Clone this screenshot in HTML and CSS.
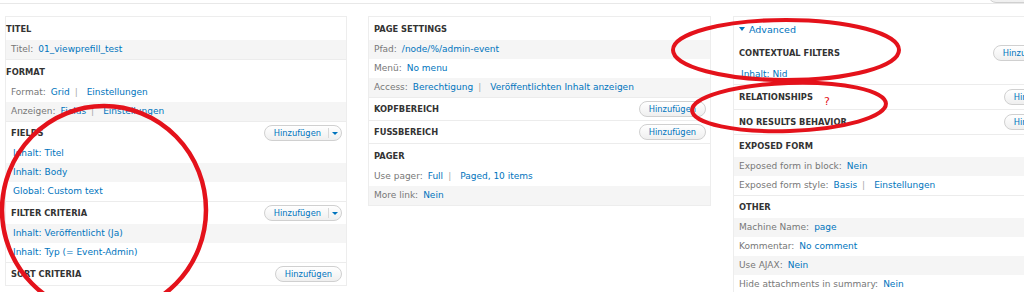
FILE: index.html
```html
<!DOCTYPE html>
<html lang="de">
<head>
    <meta charset="UTF-8">
    <title>Views UI - Display</title>
    <link rel="stylesheet" href="styles.css">
</head>
<body>
    <div class="topbar">
        <span class="btn top-btn">Hinzufügen</span>
    </div>

    <div class="columns">
        <!-- first column -->
        <div class="col col-first">
            <div class="group">
                <div class="group-title flush">TITEL</div>
                <div class="row alt"><span class="label">Titel:</span><a href="#">01_viewprefill_test</a></div>
            </div>
            <div class="group">
                <div class="group-title flush">FORMAT</div>
                <div class="row"><span class="label">Format:</span><a href="#">Grid</a><span class="sep">|</span><a href="#">Einstellungen</a></div>
                <div class="row alt"><span class="label">Anzeigen:</span><a href="#">Fields</a><span class="sep">|</span><a href="#">Einstellungen</a></div>
            </div>
            <div class="group bucket">
                <div class="group-title">FIELDS
                    <span class="btn btn-drop"><span class="btn-text">Hinzufügen</span><span class="btn-arrow"></span></span>
                </div>
                <div class="row"><a href="#">Inhalt: Titel</a></div>
                <div class="row alt"><a href="#">Inhalt: Body</a></div>
                <div class="row"><a href="#">Global: Custom text</a></div>
            </div>
            <div class="group bucket">
                <div class="group-title">FILTER CRITERIA
                    <span class="btn btn-drop"><span class="btn-text">Hinzufügen</span><span class="btn-arrow"></span></span>
                </div>
                <div class="row alt"><a href="#">Inhalt: Veröffentlicht (Ja)</a></div>
                <div class="row"><a href="#">Inhalt: Typ (= Event-Admin)</a></div>
            </div>
            <div class="group bucket">
                <div class="group-title">SORT CRITERIA
                    <span class="btn">Hinzufügen</span>
                </div>
            </div>
        </div>

        <!-- second column -->
        <div class="col col-mid">
            <div class="group">
                <div class="group-title">PAGE SETTINGS</div>
                <div class="row alt"><span class="label">Pfad:</span><a href="#">/node/%/admin-event</a></div>
                <div class="row"><span class="label">Menü:</span><a href="#">No menu</a></div>
                <div class="row alt"><span class="label">Access:</span><a href="#">Berechtigung</a><span class="sep">|</span><a href="#">Veröffentlichten Inhalt anzeigen</a></div>
            </div>
            <div class="group bucket">
                <div class="group-title">KOPFBEREICH
                    <span class="btn">Hinzufügen</span>
                </div>
            </div>
            <div class="group bucket">
                <div class="group-title">FUSSBEREICH
                    <span class="btn">Hinzufügen</span>
                </div>
            </div>
            <div class="group">
                <div class="group-title">PAGER</div>
                <div class="row"><span class="label">Use pager:</span><a href="#">Full</a><span class="sep">|</span><a href="#">Paged, 10 items</a></div>
                <div class="row alt"><span class="label">More link:</span><a href="#">Nein</a></div>
            </div>
        </div>

        <!-- third column -->
        <div class="col col-side">
            <div class="advanced">
                <span class="caret"></span><a href="#">Advanced</a>
            </div>
            <div class="group bucket">
                <div class="group-title">CONTEXTUAL FILTERS
                    <span class="btn btn-drop"><span class="btn-text">Hinzufügen</span><span class="btn-arrow"></span></span>
                </div>
                <div class="row"><a href="#">Inhalt: Nid</a></div>
            </div>
            <div class="group bucket">
                <div class="group-title">RELATIONSHIPS
                    <span class="btn">Hinzufügen</span>
                </div>
            </div>
            <div class="group bucket">
                <div class="group-title">NO RESULTS BEHAVIOR
                    <span class="btn">Hinzufügen</span>
                </div>
            </div>
            <div class="group">
                <div class="group-title">EXPOSED FORM</div>
                <div class="row alt"><span class="label">Exposed form in block:</span><a href="#">Nein</a></div>
                <div class="row"><span class="label">Exposed form style:</span><a href="#">Basis</a><span class="sep">|</span><a href="#">Einstellungen</a></div>
            </div>
            <div class="group">
                <div class="group-title">OTHER</div>
                <div class="row alt"><span class="label">Machine Name:</span><a href="#">page</a></div>
                <div class="row"><span class="label">Kommentar:</span><a href="#">No comment</a></div>
                <div class="row alt"><span class="label">Use AJAX:</span><a href="#">Nein</a></div>
                <div class="row"><span class="label">Hide attachments in summary:</span><a href="#">Nein</a></div>
            </div>
        </div>
    </div>

    <!-- hand drawn marks on top of the screenshot -->
    <svg class="marks" width="1024" height="292" viewBox="0 0 1024 292">
        <ellipse cx="786" cy="50" rx="113" ry="30"/>
        <ellipse cx="789" cy="107" rx="97" ry="24" transform="rotate(-2 789 107)"/>
        <ellipse cx="104" cy="210" rx="102" ry="104" class="big"/>
        <text x="824" y="105">?</text>
    </svg>
</body>
</html>
```

FILE: styles.css
```css
html, body {
    margin: 0;
    overflow: hidden;
    background: #fff;
}

body {
    position: relative;
    width: 1024px;
    height: 292px;
    font-family: "DejaVu Sans", Verdana, sans-serif;
    font-size: 9px;
    color: #777;
}

a {
    color: #0074bd;
    text-decoration: none;
}

.topbar {
    height: 3px;
    border-bottom: 1px solid #e8e8e8;
    display: flex;
    justify-content: flex-end;
    align-items: flex-end;
    overflow: hidden;
}

.top-btn {
    flex: none;
    margin-right: -31px;
}

.columns {
    display: flex;
    gap: 21px;
    padding: 12px 0 0 5px;
    align-items: flex-start;
}

.col {
    flex: 0 0 342px;
    box-sizing: border-box;
    border: 1px solid #ededed;
}

.col-mid {
    flex-basis: 343px;
}

.col-side {
    flex-basis: 343px;
    margin-left: 1px;
}

.group + .group {
    border-top: 1px solid #ececec;
}

.group-title {
    height: 23px;
    padding: 0 4px 0 5px;
    display: flex;
    align-items: center;
    justify-content: space-between;
    font-size: 8.3px;
    font-weight: bold;
    color: #333;
}

.group-title.flush {
    padding-left: 0;
}

.bucket .group-title,
.col-side .group-title {
    height: 22px;
}

.col-side .bucket .group-title {
    height: 24px;
}

.row {
    height: 19px;
    line-height: 19px;
    padding-left: 5px;
    white-space: nowrap;
}

.row.alt {
    background: #f5f5f5;
}

.bucket .row {
    padding-left: 7px;
}

.label {
    margin-right: 5px;
}

.sep {
    margin: 0 9px 0 5px;
    color: #aaa;
}

/* buttons */
.btn {
    display: inline-flex;
    align-items: center;
    box-sizing: border-box;
    height: 16px;
    padding: 0 9px;
    border: 1px solid #d0d0d0;
    border-radius: 8px;
    background: linear-gradient(#fff, #efefef);
    color: #0074bd;
    font-size: 8.3px;
    font-weight: normal;
    white-space: nowrap;
}

.btn-drop {
    padding: 0;
}

.btn-text {
    padding: 0 7px 0 9px;
    border-right: 1px solid #d8d8d8;
    line-height: 10px;
}

.btn-arrow {
    width: 12px;
    display: flex;
    justify-content: center;
}

.btn-arrow::before {
    content: "";
    border-left: 3px solid transparent;
    border-right: 3px solid transparent;
    border-top: 3px solid #0074bd;
}

/* advanced link */
.advanced {
    height: 24px;
    padding-left: 5px;
    display: flex;
    align-items: center;
    font-size: 9.5px;
}

.caret {
    width: 0;
    height: 0;
    margin-right: 4px;
    border-left: 3px solid transparent;
    border-right: 3px solid transparent;
    border-top: 4px solid #0074bd;
}

/* red pen marks */
.marks {
    position: absolute;
    top: 0;
    left: 0;
    pointer-events: none;
}

.marks ellipse {
    fill: none;
    stroke: #e4121b;
    stroke-width: 4;
}

.marks ellipse.big {
    stroke-width: 4.5;
}

.marks text {
    fill: #e4121b;
    font-family: "DejaVu Sans", sans-serif;
    font-size: 11px;
}
```
